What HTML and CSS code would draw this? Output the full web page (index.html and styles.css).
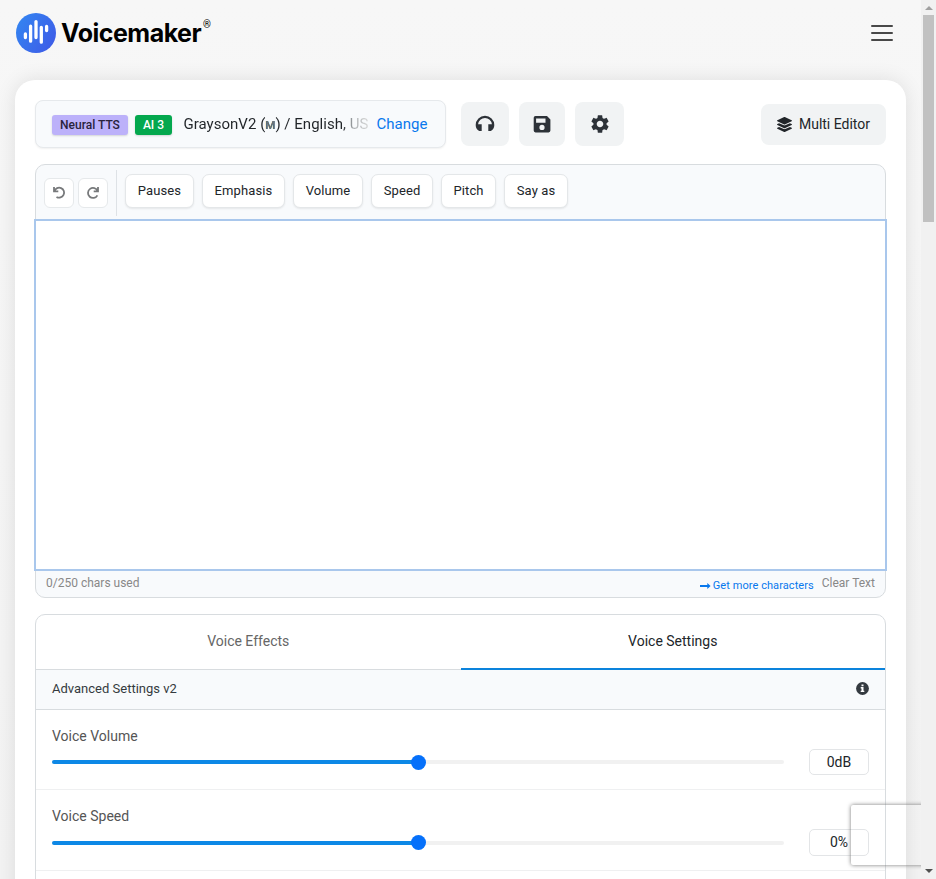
FILE: index.html
```html
<!DOCTYPE html>
<html lang="en">
<head>
<meta charset="utf-8">
<title>Voicemaker</title>
<link rel="stylesheet" href="styles.css">
</head>
<body>
<div class="viewport">
  <div class="page">
    <header class="header">
      <a class="brand">
        <svg class="brand-mark" viewBox="0 0 40 40" width="40" height="40">
          <defs><linearGradient id="g" x1="0" y1="0" x2="1" y2="0.6"><stop offset="0" stop-color="#3388f2"/><stop offset="1" stop-color="#3d5fe8"/></linearGradient></defs>
          <circle cx="20" cy="20" r="20" fill="url(#g)"/>
          <g stroke="#fff" stroke-width="3.3" stroke-linecap="round"><path d="M9.4 21v3.5M14.6 13.2v15M20 8.6v15.9M25.3 14.3v14.9M30.6 13.5v4"/></g>
        </svg>
        <span class="brand-name">Voicemaker</span><span class="brand-reg">®</span>
      </a>
      <div class="burger"><i></i><i></i><i></i></div>
    </header>
    <main class="card">
      <div class="topbar">
        <div class="voice">
          <span class="badge neural">Neural TTS</span>
          <span class="badge ai">AI 3</span>
          <span class="voice-name">GraysonV2 (<small>M</small>) / English, US</span>
          <a class="change">Change</a>
        </div>
        <button class="tool t1"><svg viewBox="0 0 24 24" width="24" height="24"><path d="M5.1 18.2C3.5 17 2.7 15 2.7 13a9.3 9.3 0 0 1 18.6 0c0 2-.8 4-2.4 5.2-.7.7-1.5.9-2.4.9h-1.2v-6.8h3.6A7 7 0 0 0 12 6a7 7 0 0 0-6.9 6.3h3.6v6.8H7.5c-.9 0-1.7-.2-2.4-.9z"/></svg></button>
        <button class="tool t2"><svg viewBox="0 0 24 24" width="24" height="24"><path fill-rule="evenodd" d="M5.5 4H17l3.4 3.4v11.2a1.8 1.8 0 0 1-1.8 1.8H5.5a1.8 1.8 0 0 1-1.8-1.8V5.8A1.8 1.8 0 0 1 5.5 4zm.6 2.5v4.2h9.4V6.5zM12 12.8a2.6 2.6 0 1 0 0 5.2 2.6 2.6 0 0 0 0-5.2z"/></svg></button>
        <button class="tool t3"><svg viewBox="0 0 24 24" width="22" height="22"><path d="M19.14 12.94c.04-.3.06-.61.06-.94 0-.32-.02-.64-.07-.94l2.03-1.58c.18-.14.23-.41.12-.61l-1.92-3.32c-.12-.22-.37-.29-.59-.22l-2.39.96c-.5-.38-1.03-.7-1.62-.94l-.36-2.54c-.04-.24-.24-.41-.48-.41h-3.84c-.24 0-.43.17-.47.41l-.36 2.54c-.59.24-1.13.57-1.62.94l-2.39-.96c-.22-.08-.47 0-.59.22L2.74 8.87c-.12.21-.08.47.12.61l2.03 1.58c-.05.3-.09.63-.09.94s.02.64.07.94l-2.03 1.58c-.18.14-.23.41-.12.61l1.92 3.32c.12.22.37.29.59.22l2.39-.96c.5.38 1.03.7 1.62.94l.36 2.54c.05.24.24.41.48.41h3.84c.24 0 .44-.17.47-.41l.36-2.54c.59-.24 1.13-.56 1.62-.94l2.39.96c.22.08.47 0 .59-.22l1.92-3.32c.12-.22.07-.47-.12-.61l-2.01-1.58zM12 15.6c-1.98 0-3.6-1.62-3.6-3.6s1.62-3.6 3.6-3.6 3.6 1.62 3.6 3.6-1.62 3.6-3.6 3.6z"/></svg></button>
        <button class="multi"><svg viewBox="0 0 512 512" width="15" height="15"><path d="M12.41 148.02l232.94 105.67c6.8 3.09 14.49 3.09 21.29 0l232.94-105.67c16.55-7.51 16.55-32.52 0-40.03L266.65 2.31a25.607 25.607 0 0 0-21.29 0L12.41 107.98c-16.55 7.51-16.55 32.53 0 40.04zm487.18 88.28l-58.09-26.33-161.64 73.27c-7.56 3.43-15.59 5.17-23.86 5.17s-16.29-1.74-23.86-5.17L70.51 209.97l-58.1 26.33c-16.55 7.5-16.55 32.5 0 40l232.94 105.59c6.8 3.08 14.49 3.08 21.29 0L499.59 276.3c16.55-7.5 16.55-32.5 0-40zm0 127.8l-57.87-26.23-161.86 73.37c-7.56 3.43-15.59 5.17-23.86 5.17s-16.29-1.74-23.86-5.17L70.29 337.87 12.41 364.1c-16.55 7.5-16.55 32.5 0 40l232.94 105.59c6.8 3.08 14.49 3.08 21.29 0L499.59 404.1c16.55-7.5 16.55-32.5 0-40z"/></svg><span>Multi Editor</span></button>
      </div>

      <section class="editor">
        <div class="toolbar">
          <button class="hist"><svg viewBox="0 0 16 16" width="16" height="16"><path d="M3 2.1v4.2h4.3M3.4 6A5 5 0 1 1 5.5 11.9"/></svg></button>
          <button class="hist redo"><svg viewBox="0 0 16 16" width="16" height="16"><path d="M13 2.1v4.2H8.7M12.6 6A5 5 0 1 0 12.4 10.3"/></svg></button>
          <span class="divider"></span>
          <button class="chip pauses">Pauses</button>
          <button class="chip emphasis">Emphasis</button>
          <button class="chip volume">Volume</button>
          <button class="chip speed">Speed</button>
          <button class="chip pitch">Pitch</button>
          <button class="chip sayas">Say as</button>
        </div>
        <div class="textarea" contenteditable="true"></div>
        <div class="status">
          <span class="used">0/250 chars used</span>
          <a class="more"><svg viewBox="0 0 11 8" width="11" height="8"><path d="M0 3h7.3V1.1L10.6 4 7.3 6.9V5H0z"/></svg>Get more characters</a>
          <a class="clear">Clear Text</a>
        </div>
      </section>

      <section class="settings">
        <div class="tabs"><div class="tab">Voice Effects</div><div class="tab active">Voice Settings</div></div>
        <div class="advanced"><span>Advanced Settings v2</span>
          <svg viewBox="0 0 13 13" width="13" height="13"><circle cx="6.5" cy="6.5" r="6.4" fill="#343a40"/><path fill="#fff" d="M5.5 2.4h2v1.8h-2zM4.7 5.1h2.8v3.6h.8V10H4.7V8.7h.8V6.4h-.8z"/></svg>
        </div>
        <div class="row"><label>Voice Volume</label><div class="control"><div class="slider"><span class="fill"></span><span class="thumb"></span></div><div class="value">0dB</div></div></div>
        <div class="row second"><label>Voice Speed</label><div class="control"><div class="slider"><span class="fill"></span><span class="thumb"></span></div><div class="value">0%</div></div></div>
      </section>
    </main>
    <div class="floating"></div>
  </div>
  <div class="scrollbar"><span class="up"></span><span class="bar"></span><span class="down"></span></div>
</div>
</body>
</html>
```
FILE: styles.css
```css
* { box-sizing: border-box; }
body { margin: 0; font-family: Roboto, "Liberation Sans", sans-serif; color: #212529; background: #f7f7f7; }
button { font: inherit; color: inherit; border: 0; padding: 0; }
svg { display: block; flex: none; }
.viewport { display: flex; width: 936px; height: 879px; overflow: hidden; }
.page { position: relative; width: 921px; height: 879px; overflow: hidden; background: linear-gradient(#f7f7f7, #f3f3f3); }
.header { display: flex; align-items: flex-start; justify-content: space-between; height: 80px; padding: 13px 28px 0 16px; }
.brand { display: flex; }
.brand-name { width: 142px; margin: 5px 0 0 5px; font: 700 25px/30px Inter, sans-serif; letter-spacing: -0.5px; color: #000; white-space: nowrap; }
.brand-reg { margin-top: 5px; font: 400 10px/14px Roboto, sans-serif; color: #000; }
.burger { display: flex; flex-direction: column; gap: 5px; padding-top: 12px; }
.burger i { width: 22px; height: 2px; border-radius: 1px; background: #484848; }
.card { width: 891px; height: 840px; margin-left: 15px; padding: 20px; border-radius: 20px 20px 0 0; background: #fff; box-shadow: 0 0 20px rgba(0,0,0,.1); }
.topbar { display: flex; align-items: center; height: 48px; }
.voice { display: flex; align-items: center; width: 411px; height: 48px; padding-left: 16px; border: 1px solid #e6e9ec; border-radius: 8px; background: #f8fafc; box-shadow: 0 1px 2px rgba(0,0,0,.06); }
.badge { height: 20px; border-radius: 3px; font-size: 12px; font-weight: 500; line-height: 20px; text-align: center; box-shadow: 0 1px 2px rgba(0,0,0,.15); }
.neural { width: 76px; margin-top: 2px; background: #bcb1fa; color: #29233c; }
.ai { width: 37px; margin: 2px 0 0 7px; background: #04a84e; color: #fff; }
.voice-name { width: 186px; margin: 1px 0 0 11.5px; font-size: 15px; line-height: 20px; letter-spacing: .02px; white-space: nowrap; overflow: hidden; background: linear-gradient(90deg, #212529 85%, #a9adb0 91%, #ddd); background-clip: text; color: transparent; }
.voice-name small { font-size: 11.5px; font-weight: 500; color: #6c757d; }
.change { margin-left: 7px; font-size: 15px; line-height: 20px; color: #0878ed; }
.tool { display: flex; align-items: center; justify-content: center; height: 44px; border-radius: 8px; background: #f1f3f4; fill: #2d3238; }
.t1 { width: 48px; margin-left: 15px; }
.t2 { width: 46px; margin-left: 10px; }
.t3 { width: 49px; margin-left: 10px; }
.multi { display: flex; align-items: center; justify-content: center; gap: 7px; width: 125px; height: 41px; margin: 1px 0 0 auto; padding-bottom: 1px; border-radius: 8px; background: #f1f3f4; font-size: 14px; fill: #212529; }
.editor { height: 434px; margin-top: 16px; border: 1px solid #d8dcdf; border-radius: 10px; background: #f8fafc; }
.toolbar { display: flex; height: 54px; padding: 5px 8px 0; }
.hist { display: flex; align-items: center; justify-content: center; width: 30px; height: 30px; margin-top: 8px; border: 1px solid #e6e9eb; border-radius: 6px; background: #fff; }
.hist svg { fill: none; stroke: #77797b; stroke-width: 1.8; }
.redo { margin-left: 4px; }
.divider { width: 1px; height: 46px; margin: 0 8px; background: #dee2e6; }
.chip { height: 34px; margin: 4px 8px 0 0; padding-bottom: 2px; border: 1px solid #e4e7e9; border-radius: 7px; background: #fff; box-shadow: 0 1px 2px rgba(0,0,0,.08); font-size: 13px; letter-spacing: .12px; }
.pauses { width: 69px; }
.emphasis { width: 83px; }
.volume { width: 70px; }
.speed { width: 62px; }
.pitch { width: 55px; }
.sayas { width: 64px; }
.textarea { height: 352px; margin: 0 -2px; border: 2px solid #a9c7ec; background: #fff; outline: 0; }
.status { display: flex; padding: 4px 10px 0; font-size: 12px; line-height: 16px; color: #888; }
.more { display: flex; align-items: center; gap: 2px; margin: 3px 8px 0 auto; height: 16px; font-size: 11px; letter-spacing: .07px; color: #0878ed; fill: #0878ed; }
.settings { height: 300px; margin-top: 16px; border: 1px solid #d8dcdf; border-radius: 10px; }
.tabs { display: flex; height: 55px; border-bottom: 1px solid #d8dcdf; }
.tab { flex: 1; height: 55px; padding-bottom: 2px; font-size: 14px; line-height: 52px; text-align: center; color: #666; }
.active { color: #212529; border-bottom: 2px solid #0c83dc; }
.advanced { display: flex; align-items: center; justify-content: space-between; height: 40px; padding: 0 16px 3px; border-bottom: 1px solid #d8dcdf; background: #f8fafc; font-size: 13px; color: #343a40; }
.row { height: 80px; padding: 16px 16px 0; border-bottom: 1px solid #eff0f1; font-size: 14px; line-height: 20px; color: #555; }
.second { height: 81px; }
.row label { display: block; }
.control { display: flex; align-items: center; justify-content: space-between; height: 26px; margin-top: 3px; }
.second .control { height: 27px; }
.slider { position: relative; width: 732px; height: 4px; border-radius: 2px; background: #f1f1f1; }
.fill { display: block; width: 50%; height: 4px; border-radius: 2px; background: #0d88e6; }
.thumb { position: absolute; top: -5.5px; left: 358.5px; width: 15px; height: 15px; border-radius: 50%; background: #0570fa; }
.value { width: 60px; height: 100%; border: 1px solid #e3e5e7; border-radius: 5px; line-height: 24px; text-align: center; color: #212529; }
.floating { position: absolute; left: 851px; top: 805px; width: 256px; height: 60px; border-radius: 2px; box-shadow: 0 0 4px #777; }
.scrollbar { display: flex; flex-direction: column; align-items: center; width: 15px; height: 879px; background: #f1f1f1; }
.up { margin-top: 6px; border: 4px solid transparent; border-top: 0; border-bottom-color: #a0a0a0; }
.bar { width: 11px; height: 207px; margin-top: 5px; background: #c1c1c1; }
.down { margin: auto 0 6px; border: 4px solid transparent; border-bottom: 0; border-top-color: #505050; }
```
